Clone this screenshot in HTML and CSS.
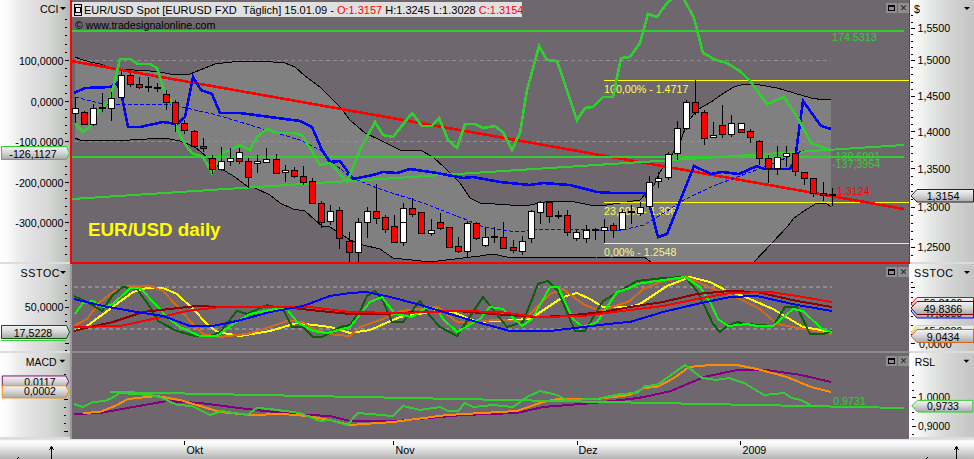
FILE: index.html
```html
<!DOCTYPE html>
<html lang="en">
<head>
    <meta charset="UTF-8">
    <title>EUR/USD daily</title>
    <link rel="stylesheet" href="styles.css">
</head>
<body>
<main class="workspace">

    <!-- price pane -->
    <svg class="axis axis-left axis-first" id="axisL1" viewBox="0 0 70 262">
        <defs>
            <linearGradient id="tagfill" x1="0" y1="0" x2="0" y2="1">
                <stop offset="0" stop-color="#f4f4f4"/>
                <stop offset="0.45" stop-color="#d8d8d8"/>
                <stop offset="1" stop-color="#a8a8a8"/>
            </linearGradient>
        </defs>
        <text class="t" x="40" y="13">CCI</text>
        <polygon class="caret" points="60,7 66,7 63,10"/>
        <text class="t end" x="63.5" y="65">100,0000</text>
        <text class="t end" x="63.5" y="106">0,0000</text>
        <text class="t end" x="63.5" y="146">-100,0000</text>
        <text class="t end" x="63.5" y="187">-200,0000</text>
        <text class="t end" x="63.5" y="227">-300,0000</text>
        <polygon class="tag" stroke="#32cd32" points="1.5,146.5 66.5,146.5 69.5,153 66.5,159.5 1.5,159.5"/>
        <text class="t mid" x="33" y="157.5">-126,1127</text>
    </svg>
    <div class="pane pane-price">
        <svg class="plot" id="pricePlot" viewBox="72 0 837 262">
            <polygon class="band" points="75,57 80,59 90,62 100,64 110,68 118,69 150,71 165,73 175,75 190,74 200,70 215,64 240,61 260,61 285,63 295,67 305,76 320,87 330,97 340,107 350,120 365,133 380,140 400,150 420,150 433,157 445,168 460,183 470,198 480,203 495,204 510,205 530,205 545,202 560,201 575,202 590,205 600,206 620,203 640,200 649,190 654,185 660,172 672,155 681,140 687,123 697,110 711,102 724,93 734,87 744,84 754,84 777,88 794,93 811,98 824,100 831,99 831,207 826,203 817,203 807,209 794,218 787,227 772,243 754,262 651,262 644,257 597,257 563,258 537,257 520,258 507,257 493,254 480,256 463,258 430,262 393,258 380,249 363,245 350,240 330,227 322,226 315,220 305,211 293,209 280,203 270,195 255,188 247,186 235,177 220,168 195,147 180,141 165,138 130,140 100,141 80,140 75,138"/>
            <line class="level" x1="74" y1="60.5" x2="831" y2="60.5"/>
            <line class="level" x1="74" y1="141.5" x2="831" y2="141.5"/>
            <polyline class="line black thin" points="75,57 80,59 90,62 100,64 110,68 118,69 150,71 165,73 175,75 190,74 200,70 215,64 240,61 260,61 285,63 295,67 305,76 320,87 330,97 340,107 350,120 365,133 380,140 400,150 420,150 433,157 445,168 460,183 470,198 480,203 495,204 510,205 530,205 545,202 560,201 575,202 590,205 600,206 620,203 640,200 649,190 654,185 660,172 672,155 681,140 687,123 697,110 711,102 724,93 734,87 744,84 754,84 777,88 794,93 811,98 824,100 831,99"/>
            <polyline class="line black thin" points="75,138 80,140 100,141 130,140 165,138 180,141 195,147 220,168 235,177 247,186 255,188 270,195 280,203 293,209 305,211 315,220 322,226 330,227 350,240 363,245 380,249 393,258 430,262 463,258 480,256 493,254 507,257 520,258 537,257 563,258 597,257 644,257 651,262"/>
            <polyline class="line black thin" points="754,262 772,243 787,227 794,218 807,209 817,203 826,203 831,207"/>
            <line class="line yellow" x1="604" y1="80.5" x2="909" y2="80.5"/>
            <line class="line yellow" x1="604" y1="202.5" x2="909" y2="202.5"/>
            <line class="line pale" x1="604" y1="243.5" x2="909" y2="243.5"/>
            <text class="t yellow-text" x="604" y="93">100,00% - 1.4717</text>
            <text class="t yellow-text" x="604" y="215">23,60% - 1.306</text>
            <text class="t pale-text" x="604" y="256">0,00% - 1.2548</text>
            <line class="line red w3" x1="71" y1="61" x2="904" y2="209"/>
            <line class="line lime-green w2" x1="72" y1="31" x2="904" y2="31"/>
            <line class="line lime-green w2" x1="72" y1="157" x2="904" y2="157"/>
            <line class="line lime-green w2" x1="72" y1="199" x2="904" y2="145"/>
            <polyline class="line blue thin dashed" points="75,97 103,104 173,105 217,115 260,128 300,140 320,150 330,160 350,177 377,188 423,203 467,220 483,227 517,232 543,229 590,230 623,230 644,225 664,213 684,200 711,187 737,177 770,165 804,150"/>
            <polyline class="line blue w3" points="74,93 85,88 110,87 117,83 122,97 128,127 140,127 163,122 177,124 185,117 193,77 201,90 212,94 220,113 240,113 270,117 300,121 312,127 322,150 330,162 340,161 353,179 373,175 383,172 397,173 410,169 437,173 463,178 473,177 500,182 530,185 543,183 570,185 597,192 613,193 645,193 651,210 658,237 667,234 694,166 711,174 722,172 739,174 757,166 764,169 790,169 795,160 803,101 821,126 831,129"/>
            <polyline class="line lime-green w3" points="75,123 83,132 92,125 98,112 110,100 115,80 120,59 130,59 138,64 150,64 157,68 163,87 172,103 177,130 187,147 192,153 203,157 212,173 222,153 230,150 240,145 250,150 257,137 267,129 277,133 293,133 302,135 313,153 320,165 330,163 347,182 350,175 360,150 375,122 383,135 393,137 412,113 422,126 432,126 439,118 448,140 457,148 465,124 475,124 483,128 495,126 503,132 512,150 520,133 527,90 532,72 539,46 547,60 557,61 577,120 585,108 593,107 603,97 613,97 621,58 630,57 640,43 648,14 657,17 667,3 672,-1 684,-1 694,18 703,53 716,60 727,63 741,72 751,82 767,104 784,97 799,120 811,143 827,149 831,150"/>
            <text class="t dark-text" x="75" y="29">© www.tradesignalonline.com</text>
            <text class="t green-text" x="832" y="41">174.5313</text>
            <text class="t green-text" x="832" y="160">-139,6991</text>
            <text class="t green-text" x="832" y="168">-137,3954</text>
            <text class="t red-text" x="837" y="195">1.3124</text>
            <text class="big-label" x="88" y="236">EUR/USD daily</text>
            <g id="candles"></g>
        </svg>
        <div class="title-bar">
            <span class="title-icon"><span></span></span>
            <span>EUR/USD Spot [EURUSD FXD  Täglich] 15.01.09 - <b>O:1.3157</b> H:1.3245 L:1.3028 <b>C:1.3154</b></span>
        </div>
        <div class="win-btns">
            <span class="win-btn"><i class="win-max"></i></span>
            <span class="win-btn">✕</span>
        </div>
    </div>
    <svg class="axis axis-right axis-first" id="axisR1" viewBox="910 0 64 262">
        <text class="t" x="914" y="13">$</text>
        <polygon class="caret" points="964,7 970,7 967,10"/>
        <text class="t" x="917.5" y="32">1,5500</text>
        <text class="t" x="917.5" y="64">1,5000</text>
        <text class="t" x="917.5" y="100">1,4500</text>
        <text class="t" x="917.5" y="136">1,4000</text>
        <text class="t" x="917.5" y="173">1,3500</text>
        <text class="t" x="917.5" y="211">1,3000</text>
        <text class="t" x="917.5" y="251">1,2500</text>
        <polygon class="tag" stroke="#222" points="911,196 917,189.5 973.5,189.5 973.5,202 917,202"/>
        <text class="t mid" x="943" y="200">1,3154</text>
    </svg>

    <!-- stochastic pane -->
    <svg class="axis axis-left" id="axisL2" viewBox="0 264 70 87">
        <text class="t spaced" x="20.5" y="277">SSTOC</text>
        <polygon class="caret" points="60,271 66,271 63,274"/>
        <text class="t end" x="63.5" y="311">50,0000</text>
        <polygon class="tag" stroke="#0b5a0b" points="1.5,325.5 66.5,325.5 69.5,332 66.5,338.5 1.5,338.5"/>
        <line class="line lime-green" x1="1" y1="340" x2="66" y2="340"/>
        <text class="t mid" x="33" y="336.5">17,5228</text>
    </svg>
    <div class="pane pane-stoch">
        <svg class="plot" viewBox="72 264 837 87">
            <line class="level thick" x1="74" y1="287" x2="832" y2="287"/>
            <line class="level thick" x1="74" y1="329" x2="832" y2="329"/>
            <polyline class="line yellow w2" points="74,331 87,326 133,292 147,288 163,288 177,294 193,309 207,324 217,332 240,336 270,331 297,323 330,327 350,333 370,330 400,317 437,311 453,312 477,322 530,319 563,297 577,293 590,299 603,307 630,307 640,304 667,286 690,277 710,282 727,291 743,296 773,309 803,327 832,332"/>
            <polyline class="line brown w2" points="74,326 87,319 100,302 113,292 127,286 150,286 163,291 177,306 190,321 203,334 220,337 247,334 270,327 287,321 303,322 310,327 327,334 350,336 360,327 383,319 400,311 438,307 457,322 470,323 493,320 523,321 550,294 563,289 583,304 600,311 630,301 643,289 663,281 687,277 713,289 740,299 760,309 777,324 803,329 832,334"/>
            <polyline class="line dark-green w2" points="74,296 87,302 102,311 112,296 123,287 137,289 150,307 158,321 177,331 195,336 210,336 220,332 237,311 247,314 267,305 283,309 292,327 303,327 313,337 322,337 340,327 350,325 360,311 367,296 375,291 383,301 392,322 403,322 420,301 430,316 440,327 457,336 483,297 507,327 523,322 538,284 548,281 558,291 575,331 585,331 603,301 623,289 637,281 663,278 685,277 697,291 705,307 713,324 720,332 727,326 737,322 747,324 773,326 785,307 797,307 810,334 823,334 832,331"/>
            <polyline class="line lime w2" points="75,314 83,303 93,301 103,307 113,304 130,288 140,288 157,306 167,317 180,327 200,336 217,336 233,324 250,314 280,308 287,309 297,322 313,331 327,333 350,327 370,302 382,297 395,314 412,317 427,307 437,309 443,319 457,332 480,319 490,307 503,309 522,326 532,319 550,287 558,287 573,319 583,327 597,322 617,292 630,288 637,284 663,280 685,277 700,287 710,302 718,319 728,326 747,324 757,326 773,326 793,309 803,311 822,329 832,332"/>
            <polyline class="line maroon w2" points="74,331 90,327 113,322 143,312 170,309 197,306 220,307 283,307 320,311 350,314 383,314 417,312 457,311 493,314 537,317 563,316 603,312 630,307 663,302 697,294 730,291 757,292 797,301 832,307"/>
            <polyline class="line red w2" points="74,327 120,326 153,319 187,311 220,307 270,307 310,307 350,312 400,313 457,311 500,312 537,317 583,316 630,310 663,306 697,299 730,293 770,292 797,296 832,302"/>
            <polyline class="line blue w2" points="74,299 103,306 137,312 163,316 190,326 213,326 237,321 270,312 303,306 330,296 350,293 367,292 390,297 417,304 450,314 477,322 510,331 550,331 583,327 617,323 630,322 663,312 697,304 730,297 757,296 797,305 832,311"/>
        </svg>
        <div class="win-btns">
            <span class="win-btn"><i class="win-max"></i></span>
            <span class="win-btn">✕</span>
        </div>
    </div>
    <svg class="axis axis-right" id="axisR2" viewBox="910 264 64 87">
        <text class="t spaced" x="914" y="277">SSTOC</text>
        <polygon class="caret" points="964,271 970,271 967,274"/>
        <polygon class="tag" stroke="#e00000" points="911,304 917,297.5 973.5,297.5 973.5,311 917,311"/>
        <text class="t mid" x="943" y="307">50,8166</text>
        <polygon class="tag" stroke="#0000ff" points="911,311 917,304.5 973.5,304.5 973.5,318 917,318"/>
        <text class="t mid" x="943" y="317">47,0000</text>
        <polygon class="tag" stroke="#7a0000" points="911,308 917,301.5 973.5,301.5 973.5,314.5 917,314.5"/>
        <text class="t mid" x="943" y="312.5">49,8366</text>
        <polygon class="tag" stroke="#e8e800" points="911,332 917,325.5 973.5,325.5 973.5,339 917,339"/>
        <text class="t mid" x="943" y="335">15,8286</text>
        <text class="t" x="919" y="348">0,0000</text>
        <polygon class="tag" stroke="#d2691e" points="911,336 917,329.5 973.5,329.5 973.5,342.5 917,342.5"/>
        <text class="t mid" x="943" y="340.5">9,0434</text>
    </svg>

    <!-- macd pane -->
    <svg class="axis axis-left" id="axisL3" viewBox="0 353 70 86">
        <text class="t" x="25.5" y="366">MACD</text>
        <polygon class="caret" points="60,360 66,360 63,363"/>
        <polygon class="tag" stroke="#800080" points="1.5,376.5 66.5,376.5 69.5,382 66.5,388.5 1.5,388.5"/>
        <text class="t mid" x="40" y="386.5">0,0117</text>
        <polygon class="tag" stroke="#ff8c00" points="1.5,386.5 66.5,386.5 69.5,392 66.5,399 1.5,399"/>
        <text class="t mid" x="40" y="396.5">0,0002</text>
    </svg>
    <div class="pane pane-macd">
        <svg class="plot" viewBox="72 353 837 86">
            <polyline class="line purple w2" points="74,414 100,413 133,407 167,401 200,403 247,409 283,413 310,415 330,416 350,421 397,421 463,415 517,413 543,407 593,403 630,399 644,397 671,391 704,377 737,370 767,370 801,375 831,382"/>
            <polyline class="line orange w2" points="83,413 100,412 117,405 128,399 157,396 180,400 207,408 220,412 250,415 283,414 307,416 330,420 350,425 393,422 447,415 517,411 540,403 557,399 597,399 630,395 644,388 657,387 674,378 689,367 711,365 737,365 757,369 787,377 811,387 831,392"/>
            <line class="line lime-green w2" x1="110" y1="392" x2="904" y2="408"/>
            <polyline class="line lime-green w2" points="74,404 83,407 93,402 105,401 112,398 120,393 150,395 160,397 177,405 192,406 210,415 222,411 247,415 257,408 270,409 300,413 320,421 330,420 347,425 358,413 393,416 403,406 420,410 440,407 448,411 458,411 465,403 473,407 493,405 513,407 527,397 540,391 557,395 567,400 597,399 620,394 637,393 645,386 657,385 685,365 702,378 716,380 729,378 744,383 764,395 784,393 792,398 801,400 812,406"/>
            <text class="t green-text" x="833" y="405">0.9731</text>
        </svg>
        <div class="win-btns">
            <span class="win-btn"><i class="win-max"></i></span>
            <span class="win-btn">✕</span>
        </div>
    </div>
    <svg class="axis axis-right" id="axisR3" viewBox="910 353 64 86">
        <text class="t" x="914" y="366">RSL</text>
        <polygon class="caret" points="964,360 970,360 967,363"/>
        <text class="t" x="917.5" y="402">1,0000</text>
        <text class="t" x="917.5" y="432">0,9000</text>
        <polygon class="tag" stroke="#32cd32" points="911,407 917,401.5 973.5,401.5 973.5,413.5 917,413.5"/>
        <text class="t mid" x="943" y="411.5">0,9733</text>
    </svg>

    <!-- date axis -->
    <svg class="date-bar date-side" viewBox="0 439 70 20">
        <path class="arrow" d="M51.5 459V447M49 450l2.5-3 2.5 3M17 459l2-2"/>
    </svg>
    <svg class="date-bar" viewBox="70 439 840 20">
        <path class="arrow" d="M184.5 441v4M393.5 441v4M577.5 441v4M740.5 441v4"/>
        <text class="t" x="186.5" y="454">Okt</text>
        <text class="t" x="395.5" y="454">Nov</text>
        <text class="t" x="578.5" y="454">Dez</text>
        <text class="t" x="742.5" y="454">2009</text>
    </svg>
    <svg class="date-bar date-side" viewBox="910 439 64 20">
        <path class="arrow" d="M956.5 459V447M954 450l2.5-3 2.5 3M926 459l2-2"/>
    </svg>
</main>
<script src="script.js"></script>
</body>
</html>
```

FILE: styles.css
```css
body {
    margin: 0;
    overflow: hidden;
    background: #6e686e;
}
.workspace {
    display: grid;
    grid-template-columns: 70px 840px 64px;
    grid-template-rows: 264px 89px 86px 20px;
    width: 974px;
    height: 459px;
}
svg {
    display: block;
    width: 100%;
    height: 100%;
}
text {
    font-family: "Liberation Sans", Arial, sans-serif;
}
.axis {
    box-sizing: border-box;
    border-bottom: 2px solid #dcdcdc;
}
.axis-left {
    background: linear-gradient(to right, #fff 0, #fbfbfb 10%, #eceeec 25%, #e0dde0 50%, #d6d8d6 70%, #c2c6c2 90%, #b4b4b4 100%);
}
.axis-right {
    background: linear-gradient(to right, #fff 0, #f8f8f8 12%, #e6eae6 30%, #d8d8d8 55%, #ccd0cc 75%, #c4c4c4 100%);
}
.t {
    font-size: 10.7px;
    fill: #000;
}
.end { text-anchor: end; }
.mid { text-anchor: middle; }
.spaced { letter-spacing: 0.6px; }
.caret { fill: #000; }
.tag {
    fill: url(#tagfill);
    stroke-width: 1;
}
.pane {
    position: relative;
    box-sizing: border-box;
    background: #6e686e;
}
.pane-price {
    border-left: 2px solid #f00;
    border-right: 1px solid #f00;
    border-bottom: 2px solid #f00;
}
.pane-stoch,
.pane-macd {
    border-left: 2px solid #999;
    border-right: 1px solid #f4f4f4;
}
.pane-stoch {
    border-bottom: 2px solid #8c8c8c;
}
.plot {
    overflow: hidden;
}
.band { fill: #808080; }
.level {
    stroke: #8f8f8f;
    stroke-dasharray: 4 3;
}
.level.thick {
    stroke-width: 2;
    stroke: #8c8c8c;
}
.line {
    fill: none;
    stroke-width: 1;
    shape-rendering: crispEdges;
}
.thin { stroke-width: 1; }
.w2 { stroke-width: 2; }
.w3 { stroke-width: 2.6; }
.dashed { stroke-dasharray: 4 2; }
.black { stroke: #000; }
.blue { stroke: #00f; }
.red { stroke: #f00; }
.maroon { stroke: #8b0000; }
.lime { stroke: #0f0; }
.lime-green { stroke: #32cd32; }
.dark-green { stroke: #0b5f0b; }
.yellow { stroke: #ff0; }
.pale { stroke: #f4f48c; }
.brown { stroke: #d2691e; }
.orange { stroke: #ff8c00; }
.purple { stroke: #800080; }
.yellow-text { fill: #ffff4d; }
.pale-text { fill: #f4f48c; }
.green-text { fill: #32cd32; }
.red-text { fill: #f00; }
.dark-text { fill: #000; }
.big-label {
    font-size: 18.8px;
    font-weight: bold;
    fill: #ff0;
}
.wick { stroke: #000; stroke-width: 1; shape-rendering: crispEdges; }
.body { stroke: #000; stroke-width: 1; shape-rendering: crispEdges; }
.body-w { fill: #fff; }
.body-r { fill: #f00; }
.title-bar {
    position: absolute;
    left: 0;
    top: 2px;
    width: 450px;
    height: 15px;
    display: flex;
    align-items: center;
    gap: 2px;
    padding-left: 2px;
    box-sizing: border-box;
    background: #e0e0e0;
    font-family: "Liberation Sans", Arial, sans-serif;
    font-size: 11px;
    white-space: pre;
    color: #000;
}
.title-bar b {
    font-weight: normal;
    color: #f00;
}
.title-icon {
    display: flex;
    align-items: center;
    justify-content: center;
    width: 12px;
    height: 12px;
    box-sizing: border-box;
    border: 1px solid #000;
}
.title-icon span {
    width: 6px;
    height: 6px;
    border: 1px solid #000;
    box-sizing: border-box;
    background: #eee;
}
.win-btns {
    position: absolute;
    right: 0;
    top: 3px;
    display: flex;
    gap: 1px;
}
.win-btn {
    display: flex;
    align-items: center;
    justify-content: center;
    width: 11px;
    height: 10px;
    background: #8e8e8e;
    font-family: "DejaVu Sans", sans-serif;
    font-size: 9px;
    line-height: 10px;
    color: #222;
}
.win-max {
    width: 7px;
    height: 6px;
    box-sizing: border-box;
    border: 1px solid #000;
    border-top-width: 2px;
}
.date-bar {
    background: linear-gradient(to bottom, #d8d8d8 0, #fff 2px, #f4f4f4 30%, #d4d4d4 65%, #b4b4b4 100%);
}
.arrow {
    fill: none;
    stroke: #000;
    stroke-width: 1;
    shape-rendering: crispEdges;
}
```

FILE: script.js
```js
// [kind, high, low, bodyTop, bodyBottom], one per trading day
const candles = [
    ['w',97,123,108,113],['r',111,125,112,124],['w',104,126,108,124],['d',93,112,108,108],['w',92,121,98,108],
    ['w',70,100,75,97],['r',73,87,75,84],['r',77,89,84,87],['d',77,92,87,87],['d',83,92,88,88],
    ['r',90,110,94,102],['r',100,132,102,123],['r',120,134,123,130],['r',130,148,131,146],['r',138,152,146,148],
    ['r',155,174,158,169],['w',147,171,161,169],['w',148,166,158,161],['r',148,164,158,161],['r',158,188,161,177],
    ['w',155,173,161,163],['w',148,163,159,162],['r',154,173,159,173],['w',165,182,170,172],['r',167,178,170,176],
    ['r',166,185,176,182],['r',178,203,181,203],['r',201,228,203,222],['w',205,225,211,221],['r',207,249,210,238],
    ['r',232,262,241,252],['w',218,262,222,252],['w',207,238,211,222],['r',184,224,211,218],['r',215,233,217,229],
    ['r',215,242,226,242],['w',203,246,208,242],['r',198,217,208,214],['r',212,233,212,233],['w',219,236,230,233],
    ['r',213,230,222,228],['r',227,248,227,247],['r',237,253,246,251],['w',221,257,223,251],['r',222,240,223,238],
    ['w',227,247,237,245],['d',227,243,237,237],['r',222,249,237,248],['r',240,253,247,250],['w',236,255,241,251],
    ['w',210,243,211,238],['w',201,224,202,212],['r',202,223,202,216],['d',211,219,216,216],['r',210,236,215,232],
    ['w',230,241,232,238],['w',225,243,230,238],['d',228,240,230,230],['w',219,243,227,230],['r',223,238,225,230],
    ['w',210,230,212,229],['d',205,224,212,212],['w',202,216,207,213],['w',176,207,182,206],['w',172,188,178,181],
    ['w',152,180,154,177],['w',121,160,128,153],['w',100,130,102,128],['r',80,115,102,112],['r',110,145,112,138],
    ['w',122,138,135,137],['r',105,138,125,134],['w',115,137,123,134],['w',123,132,123,132],['r',129,143,131,137],
    ['r',140,165,141,158],['r',155,183,158,168],['w',146,175,157,168],['w',146,167,153,156],['r',147,176,153,171],
    ['r',172,185,172,178],['r',178,197,178,193],['r',182,201,193,195],['d',188,206,195,195]
]
// days whose body is split in two colours
const overlays = [[18,'w',152,158],[36,'w',208,222],[73,'r',129,132]]

const NS = 'http://www.w3.org/2000/svg'

function add(parent, name, attrs) {
    const el = document.createElementNS(NS, name)
    for (const key in attrs) el.setAttribute(key, attrs[key])
    parent.appendChild(el)
}

function candleX(i) {
    return Math.round(75 + i * 9.117) + 0.5
}

function drawCandles() {
    const group = document.getElementById('candles')
    candles.forEach((c, i) => {
        const x = candleX(i)
        add(group, 'line', {class: 'wick', x1: x, x2: x, y1: c[1], y2: c[2]})
        if (c[0] === 'd') {
            add(group, 'rect', {x: x - 3.5, y: c[3] - 1, width: 7, height: 2, fill: '#000'})
        } else {
            add(group, 'rect', {class: 'body body-' + c[0], x: x - 3, y: c[3] + 0.5, width: 6, height: c[4] - c[3]})
        }
    })
    overlays.forEach(o => {
        add(group, 'rect', {class: 'body body-' + o[1], x: candleX(o[0]) - 3, y: o[2] + 0.5, width: 6, height: o[3] - o[2]})
    })
}

// majors are the labelled y positions, minors are spread evenly between them
function drawTicks(id, x, majors, parts, top, bottom) {
    const svg = document.getElementById(id)
    const step = (majors[1] - majors[0]) / parts
    const group = document.createElementNS(NS, 'g')
    svg.insertBefore(group, svg.children[id === 'axisL1' ? 1 : 0])
    const tick = (y, len) => add(group, 'line', {class: 'wick', x1: x, x2: x + len, y1: Math.round(y) + 0.5, y2: Math.round(y) + 0.5})
    for (let y = majors[0] - step; y > top; y -= step) tick(y, 2)
    majors.forEach((m, k) => {
        tick(m, 4)
        const next = majors[k + 1]
        if (next) for (let j = 1; j < parts; j++) tick(m + (next - m) * j / parts, 2)
    })
    const last = majors[majors.length - 1]
    const lastStep = majors.length > 1 ? (last - majors[majors.length - 2]) / parts : step
    for (let y = last + lastStep; y < bottom; y += lastStep) tick(y, 2)
}

drawCandles()
drawTicks('axisL1', 65, [60, 101, 141, 182, 222], 5, 14, 262)
drawTicks('axisL2', 65, [307, 343], 5, 280, 351)
drawTicks('axisL3', 65, [400, 433], 4, 370, 439)
drawTicks('axisR1', 911, [28, 60, 96, 131, 168, 207, 247], 5, 14, 262)
drawTicks('axisR2', 911, [287, 307, 343], 4, 280, 351)
drawTicks('axisR3', 911, [398, 428], 4, 370, 439)
```
